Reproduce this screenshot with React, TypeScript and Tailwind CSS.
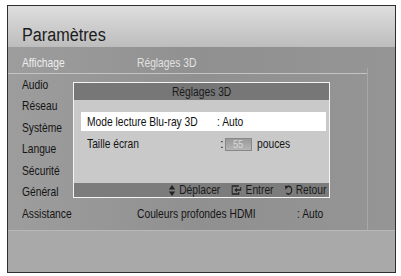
const sans = { fontFamily: '"Liberation Sans", Arial, sans-serif' };

const menu = ["Affichage", "Audio", "Réseau", "Système", "Langue", "Sécurité", "Général", "Assistance"];

// condensed look: the TV menu font is a narrow Helvetica
function N({ children, className = "" }: { children: React.ReactNode; className?: string }) {
  return <span className={`inline-block whitespace-nowrap origin-left scale-x-[0.79] ${className}`}>{children}</span>;
}

function UpDown() {
  return (
    <svg width="8" height="11" viewBox="0 0 8 11" className="mr-[5px]">
      <path d="M4 0 L8 4.5 H0 Z" fill="#222" />
      <path d="M4 11 L8 6.5 H0 Z" fill="#222" />
    </svg>
  );
}

function EnterIcon() {
  return (
    <svg width="13" height="10" viewBox="0 0 13 10" className="mr-[5px]">
      <path d="M9.5 1 H1 V9 H9.5 V7" fill="none" stroke="#222" strokeWidth="1.4" />
      <path d="M12 2 V5 H5.5" fill="none" stroke="#222" strokeWidth="1.4" />
      <path d="M4 5 L7 2.6 V7.4 Z" fill="#222" />
    </svg>
  );
}

function ReturnIcon() {
  return (
    <svg width="11" height="10" viewBox="0 0 11 10" className="mr-[3px]">
      <path d="M2.6 2.4 A4 4 0 1 1 2.6 8" fill="none" stroke="#222" strokeWidth="1.4" />
      <path d="M0.8 0.6 L5 1.5 L1.8 4.8 Z" fill="#222" />
    </svg>
  );
}

export default function App() {
  return (
    <div className="w-[401px] h-[276px] bg-white pt-[5px] pl-[7px]" style={sans}>
      <div className="relative w-[389px] h-[268px] border border-[#2e2e2e] flex flex-col overflow-hidden">
        <div className="h-[41px] shrink-0 bg-gradient-to-b from-[#dedede] to-[#bdbdbd] flex items-end pl-[14px] pb-[1px]">
          <span className="inline-block origin-left scale-x-[0.9] text-[18px] leading-[22px] text-[#1c1c1c]">Paramètres</span>
        </div>

        <div className="h-[183px] shrink-0 bg-gradient-to-r from-[#9d9d9d] via-[#909090] to-[#959595] flex flex-col pt-[5px] relative">
          {menu.map((m, i) => (
            <div
              key={m}
              className={`h-[21.57px] shrink-0 flex items-center pl-[14px] text-[13px] ${
                i === 0 ? "text-[#eeeeee] border-b border-[#c4c4c4] mr-[28px]" : "text-[#151515]"
              }`}
            >
              <span className="w-[115px]">
                <N>{m}</N>
              </span>
              {i === 0 && <N className="text-[#e2e2e2]">Réglages 3D</N>}
              {i === menu.length - 1 && (
                <>
                  <span className="w-[160px]">
                    <N>Couleurs profondes HDMI</N>
                  </span>
                  <N>: Auto</N>
                </>
              )}
            </div>
          ))}
          <div className="absolute left-[359px] top-[21px] bottom-0 w-px bg-[#a8a8a8]" />
        </div>

        <div className="flex-1 bg-[#a9a9a9] border-t border-[#b9b9b9]" />

        <div className="absolute left-[65px] top-[76px] w-[257px] h-[116px] border-[1.5px] border-[#f4f4f4] flex flex-col bg-[#c9c9c9]">
          <div className="h-[17px] shrink-0 bg-[#777777] flex items-center justify-center text-[13px] text-[#1a1a1a]">
            <span className="inline-block whitespace-nowrap scale-x-[0.79]">Réglages 3D</span>
          </div>
          <div className="flex-1 flex flex-col pt-[12px]">
            <div className="h-[19px] shrink-0 ml-[7px] mr-[3px] bg-white flex items-center pl-[6px] text-[13px] text-[#111]">
              <span className="w-[130px]">
                <N>Mode lecture Blu-ray 3D</N>
              </span>
              <N>: Auto</N>
            </div>
            <div className="h-[26px] shrink-0 ml-[7px] flex items-center pl-[6px] text-[13px] text-[#151515]">
              <span className="w-[133px]">
                <N>Taille écran</N>
              </span>
              <span className="mr-[1px]">:</span>
              <span className="w-[27px] h-[13px] bg-gradient-to-b from-[#9a9a9a] to-[#b5b5b5] border border-[#888] text-[#d8d8d8] text-[11px] flex items-center justify-center mr-[5px]">
                <span className="inline-block scale-x-[0.85]">55</span>
              </span>
              <N>pouces</N>
            </div>
          </div>
          <div className="h-[14px] shrink-0 bg-[#7c7c7c] flex items-center justify-end pr-[3px] text-[13px] text-[#1a1a1a] overflow-hidden">
            <div className="flex items-center origin-right scale-x-[0.79] whitespace-nowrap">
              <UpDown />
              <span className="mr-[14px]">Déplacer</span>
              <EnterIcon />
              <span className="mr-[14px]">Entrer</span>
              <ReturnIcon />
              <span>Retour</span>
            </div>
          </div>
        </div>
      </div>
    </div>
  );
}
